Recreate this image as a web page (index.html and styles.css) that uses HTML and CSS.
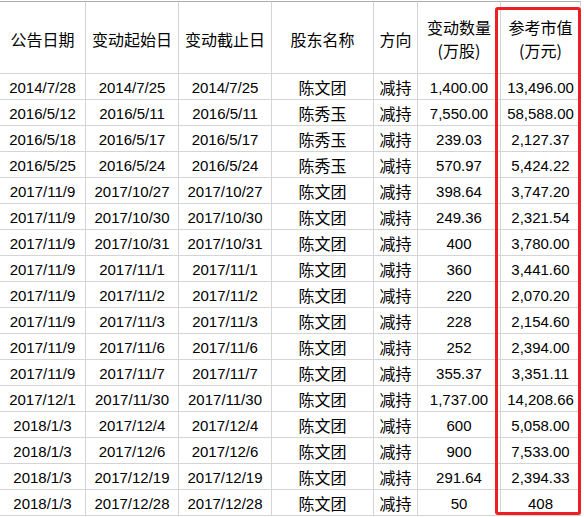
FILE: index.html
```html
<!DOCTYPE html>
<html lang="zh-CN">
<head>
<meta charset="utf-8">
<title>股东减持</title>
<link rel="stylesheet" href="styles.css">
</head>
<body>
<div class="sheet">
  <div class="grid">
    <div class="cell head">公告日期</div>
    <div class="cell head">变动起始日</div>
    <div class="cell head">变动截止日</div>
    <div class="cell head">股东名称</div>
    <div class="cell head">方向</div>
    <div class="cell head two">变动数量<br>(万股)</div>
    <div class="cell head two last">参考市值<br>(万元)</div>

    <div class="cell">2014/7/28</div><div class="cell">2014/7/25</div><div class="cell">2014/7/25</div><div class="cell cn">陈文团</div><div class="cell cn">减持</div><div class="cell">1,400.00</div><div class="cell last">13,496.00</div>
    <div class="cell">2016/5/12</div><div class="cell">2016/5/11</div><div class="cell">2016/5/11</div><div class="cell cn">陈秀玉</div><div class="cell cn">减持</div><div class="cell">7,550.00</div><div class="cell last">58,588.00</div>
    <div class="cell">2016/5/18</div><div class="cell">2016/5/17</div><div class="cell">2016/5/17</div><div class="cell cn">陈秀玉</div><div class="cell cn">减持</div><div class="cell">239.03</div><div class="cell last">2,127.37</div>
    <div class="cell">2016/5/25</div><div class="cell">2016/5/24</div><div class="cell">2016/5/24</div><div class="cell cn">陈秀玉</div><div class="cell cn">减持</div><div class="cell">570.97</div><div class="cell last">5,424.22</div>
    <div class="cell">2017/11/9</div><div class="cell">2017/10/27</div><div class="cell">2017/10/27</div><div class="cell cn">陈文团</div><div class="cell cn">减持</div><div class="cell">398.64</div><div class="cell last">3,747.20</div>
    <div class="cell">2017/11/9</div><div class="cell">2017/10/30</div><div class="cell">2017/10/30</div><div class="cell cn">陈文团</div><div class="cell cn">减持</div><div class="cell">249.36</div><div class="cell last">2,321.54</div>
    <div class="cell">2017/11/9</div><div class="cell">2017/10/31</div><div class="cell">2017/10/31</div><div class="cell cn">陈文团</div><div class="cell cn">减持</div><div class="cell">400</div><div class="cell last">3,780.00</div>
    <div class="cell">2017/11/9</div><div class="cell">2017/11/1</div><div class="cell">2017/11/1</div><div class="cell cn">陈文团</div><div class="cell cn">减持</div><div class="cell">360</div><div class="cell last">3,441.60</div>
    <div class="cell">2017/11/9</div><div class="cell">2017/11/2</div><div class="cell">2017/11/2</div><div class="cell cn">陈文团</div><div class="cell cn">减持</div><div class="cell">220</div><div class="cell last">2,070.20</div>
    <div class="cell">2017/11/9</div><div class="cell">2017/11/3</div><div class="cell">2017/11/3</div><div class="cell cn">陈文团</div><div class="cell cn">减持</div><div class="cell">228</div><div class="cell last">2,154.60</div>
    <div class="cell">2017/11/9</div><div class="cell">2017/11/6</div><div class="cell">2017/11/6</div><div class="cell cn">陈文团</div><div class="cell cn">减持</div><div class="cell">252</div><div class="cell last">2,394.00</div>
    <div class="cell">2017/11/9</div><div class="cell">2017/11/7</div><div class="cell">2017/11/7</div><div class="cell cn">陈文团</div><div class="cell cn">减持</div><div class="cell">355.37</div><div class="cell last">3,351.11</div>
    <div class="cell">2017/12/1</div><div class="cell">2017/11/30</div><div class="cell">2017/11/30</div><div class="cell cn">陈文团</div><div class="cell cn">减持</div><div class="cell">1,737.00</div><div class="cell last">14,208.66</div>
    <div class="cell">2018/1/3</div><div class="cell">2017/12/4</div><div class="cell">2017/12/4</div><div class="cell cn">陈文团</div><div class="cell cn">减持</div><div class="cell">600</div><div class="cell last">5,058.00</div>
    <div class="cell">2018/1/3</div><div class="cell">2017/12/6</div><div class="cell">2017/12/6</div><div class="cell cn">陈文团</div><div class="cell cn">减持</div><div class="cell">900</div><div class="cell last">7,533.00</div>
    <div class="cell">2018/1/3</div><div class="cell">2017/12/19</div><div class="cell">2017/12/19</div><div class="cell cn">陈文团</div><div class="cell cn">减持</div><div class="cell">291.64</div><div class="cell last">2,394.33</div>
    <div class="cell">2018/1/3</div><div class="cell">2017/12/28</div><div class="cell">2017/12/28</div><div class="cell cn">陈文团</div><div class="cell cn">减持</div><div class="cell">50</div><div class="cell last">408</div>
  </div>
  <div class="highlight"></div>
</div>
</body>
</html>
```

FILE: styles.css
```css
html, body {
  margin: 0;
  padding: 0;
  background: #ffffff;
}

body {
  font-family: "Liberation Sans", "Noto Sans CJK SC", sans-serif;
  font-size: 15px;
  color: #000000;
}

.sheet {
  position: relative;
  width: 584px;
  height: 517px;
  overflow: hidden;
}

.grid {
  display: grid;
  grid-template-columns: 86px 93px 93px 102px 44px 83px 80px;
  grid-template-rows: 73px;
  grid-auto-rows: 26px;
  width: 581px;
  border-top: 1px solid #ffffff;
}

.cell {
  box-sizing: border-box;
  border-right: 1px solid #d4d4d4;
  border-bottom: 1px solid #d4d4d4;
  text-align: center;
  white-space: nowrap;
  line-height: 23px;
  padding-top: 2px;
}

.cell.cn {
  font-family: "Noto Sans CJK SC", sans-serif;
  font-size: 16px;
}

.head {
  font-family: "Noto Sans CJK SC", sans-serif;
  font-size: 16px;
  border-top: 1px solid #ababab;
  display: flex;
  align-items: center;
  justify-content: center;
  padding-top: 3px;
  line-height: 23px;
}

.head.two {
  flex-direction: column;
}

.highlight {
  position: absolute;
  left: 495px;
  top: 7px;
  width: 86px;
  height: 508px;
  box-sizing: border-box;
  border: 3px solid #ee1f23;
  border-radius: 3px;
}
```
